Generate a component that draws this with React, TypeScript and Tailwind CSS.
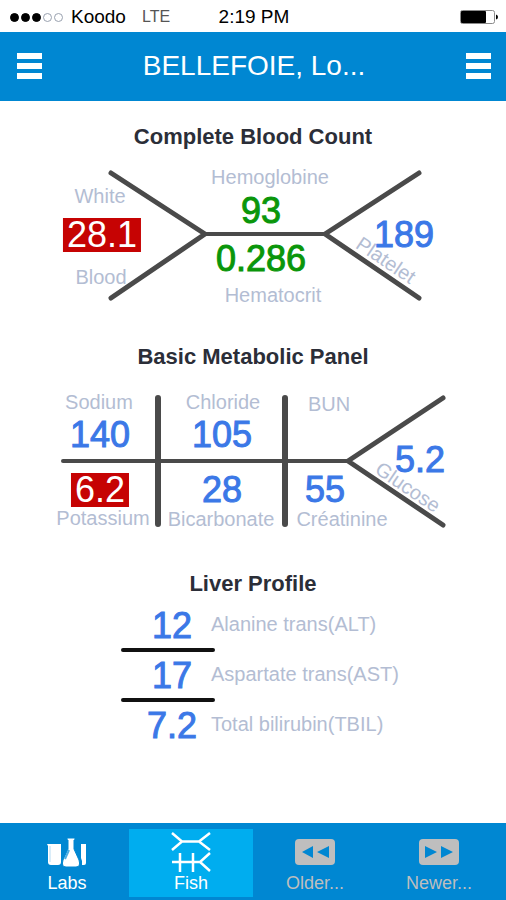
import clsx from "clsx";

type Tone = "high" | "normal" | "stable" | "label";

interface Mark {
  text: string;
  x: number;
  y: number;
  tone: Tone;
  slanted?: boolean;
}

const toneClasses: Record<Tone, string> = {
  high: "bg-[#c60303] px-1 text-4xl leading-[34px] text-white",
  normal: "text-4xl leading-9 text-[#3b78e7] [-webkit-text-stroke:1px_#3b78e7]",
  stable: "text-4xl leading-9 text-[#0a960a] [-webkit-text-stroke:1px_#0a960a]",
  label: "text-xl leading-5 text-[#b3bdd3]",
};

// x / y are the centre of each text on the 400px wide diagram
const bloodCount: Mark[] = [
  { text: "White", x: 47, y: 31, tone: "label" },
  { text: "28.1", x: 49, y: 70, tone: "high" },
  { text: "Blood", x: 48, y: 112, tone: "label" },
  { text: "Hemoglobine", x: 217, y: 12, tone: "label" },
  { text: "93", x: 208, y: 46, tone: "stable" },
  { text: "0.286", x: 208, y: 94, tone: "stable" },
  { text: "Hematocrit", x: 220, y: 130, tone: "label" },
  { text: "Platelet", x: 333, y: 95, tone: "label", slanted: true },
  { text: "189", x: 351, y: 70, tone: "normal" },
];

const metabolicPanel: Mark[] = [
  { text: "Sodium", x: 46, y: 12, tone: "label" },
  { text: "140", x: 47, y: 45, tone: "normal" },
  { text: "6.2", x: 47, y: 100, tone: "high" },
  { text: "Potassium", x: 50, y: 128, tone: "label" },
  { text: "Chloride", x: 170, y: 12, tone: "label" },
  { text: "105", x: 169, y: 45, tone: "normal" },
  { text: "28", x: 169, y: 100, tone: "normal" },
  { text: "Bicarbonate", x: 168, y: 129, tone: "label" },
  { text: "BUN", x: 276, y: 14, tone: "label" },
  { text: "55", x: 272, y: 100, tone: "normal" },
  { text: "Créatinine", x: 289, y: 129, tone: "label" },
  { text: "Glucose", x: 355, y: 97, tone: "label", slanted: true },
  { text: "5.2", x: 367, y: 70, tone: "normal" },
];

const liverProfile = [
  { value: "12", name: "Alanine trans(ALT)" },
  { value: "17", name: "Aspartate trans(AST)" },
  { value: "7.2", name: "Total bilirubin(TBIL)" },
];

function Diagram({ marks, children }: { marks: Mark[]; children: React.ReactNode }) {
  return (
    <div className="relative mx-auto h-[142px] w-[400px]">
      <svg
        viewBox="0 0 400 142"
        className="block h-full w-full"
        fill="none"
        stroke="#4a4a4a"
        strokeWidth="5"
        strokeLinecap="round"
        strokeLinejoin="round"
        aria-hidden="true"
      >
        {children}
      </svg>
      {marks.map((mark) => (
        <span
          key={mark.text}
          className={clsx(
            "absolute -translate-x-1/2 -translate-y-1/2 whitespace-nowrap",
            toneClasses[mark.tone],
            mark.slanted && "rotate-34"
          )}
          style={{ left: mark.x, top: mark.y }}
        >
          {mark.text}
        </span>
      ))}
    </div>
  );
}

function SectionTitle({ children }: { children: React.ReactNode }) {
  return <h2 className="text-center text-[22px] leading-7 font-bold text-[#2b2e38]">{children}</h2>;
}

function MenuButton({ label }: { label: string }) {
  return (
    <button type="button" aria-label={label} className="flex flex-col gap-1">
      <span className="h-[6px] w-[25px] bg-white" />
      <span className="h-[6px] w-[25px] bg-white" />
      <span className="h-[6px] w-[25px] bg-white" />
    </button>
  );
}

function StatusBar() {
  return (
    <div className="grid h-8 grid-cols-[1fr_auto_1fr] items-center pt-[2px] pr-2 pl-[10px] text-[19px] leading-6 text-black">
      <div className="flex items-center">
        <div className="flex gap-[2px]">
          {[true, true, true, false, false].map((filled, i) => (
            <span
              key={i}
              className={clsx(
                "h-[9px] w-[9px] rounded-full border",
                filled ? "border-black bg-black" : "border-gray-400"
              )}
            />
          ))}
        </div>
        <span className="ml-2">Koodo</span>
        <span className="ml-4 text-base text-[#555]">LTE</span>
      </div>
      <span className="font-medium">2:19 PM</span>
      <svg viewBox="0 0 38 16" className="h-4 w-[38px] justify-self-end" aria-label="Battery">
        <rect x="0.5" y="1.5" width="34" height="13" rx="2" fill="white" stroke="#8a8a8a" />
        <rect x="1" y="2" width="25" height="12" rx="1" fill="black" />
        <path d="M36 5.500 Q38 6 38 8 Q38 10 36 10.500 Z" fill="black" />
      </svg>
    </div>
  );
}

function LabsIcon() {
  return (
    <svg viewBox="0 0 40 30" className="h-[30px] w-10" aria-hidden="true">
      <path d="M0 7H14V25Q14 28 11 28H4Q1 28 1 25V9Z" fill="white" />
      <path d="M3 9V25" stroke="#b5dcf3" strokeWidth="1" />
      <path
        d="M20 1H28V3H27V12L32 23Q34 30 29 30H19Q14 30 16 23L21 12V3H20Z"
        fill="white"
        stroke="#0087d2"
        strokeWidth="1"
      />
      <path d="M22 13L18 22" stroke="#4aaee3" strokeWidth="2" />
      <path d="M34 7H39V26Q39 28 37 28H35V24L34 21Z" fill="white" />
    </svg>
  );
}

function FishIcon() {
  return (
    <svg viewBox="0 0 40 42" className="h-[42px] w-10" fill="none" stroke="white" strokeWidth="2.5" aria-hidden="true">
      <path d="M1 2L11 10.500L1 19M11 10.500H28M39 2L28 10.500L39 19" />
      <path d="M1 31H29M9 22V41M22 22V41M39 22L29 31L39 40" />
    </svg>
  );
}

function SkipIcon({ forward = false }: { forward?: boolean }) {
  return (
    <svg viewBox="0 0 40 26" className="h-[26px] w-10" aria-hidden="true">
      <rect width="40" height="26" rx="4" fill="#bebebe" />
      {forward ? (
        <path d="M6 7V19L18 13ZM22 7V19L34 13Z" fill="#0087d2" />
      ) : (
        <path d="M18 7V19L7 13ZM34 7V19L22 13Z" fill="#0087d2" />
      )}
    </svg>
  );
}

const tabs = [
  { name: "Labs", icon: <LabsIcon />, active: false, muted: false },
  { name: "Fish", icon: <FishIcon />, active: true, muted: false },
  { name: "Older...", icon: <SkipIcon />, active: false, muted: true },
  { name: "Newer...", icon: <SkipIcon forward />, active: false, muted: true },
];

export default function App() {
  return (
    <div className="flex min-h-screen flex-col bg-white font-['Liberation_Sans',Arial,sans-serif]">
      <StatusBar />
      <header className="flex h-[69px] items-center justify-between bg-[#0087d2] pr-[15px] pb-[2px] pl-[17px]">
        <MenuButton label="Open menu" />
        <h1 className="text-[28px] leading-8 text-white">BELLEFOIE, Lo...</h1>
        <MenuButton label="Open options" />
      </header>

      <main className="flex-1 pt-[22px]">
        <section>
          <SectionTitle>Complete Blood Count</SectionTitle>
          <div className="pt-[14px]">
            <Diagram marks={bloodCount}>
              <path d="M58 8L152 69L58 133" />
              <path d="M152 69H272" strokeWidth="4" />
              <path d="M366 8L272 69L366 133" />
            </Diagram>
          </div>
        </section>

        <section className="pt-9">
          <SectionTitle>Basic Metabolic Panel</SectionTitle>
          <div className="pt-[19px]">
            <Diagram marks={metabolicPanel}>
              <path d="M10 71H295" strokeWidth="4" />
              <path d="M105 8V134M232 8V134" strokeWidth="6" />
              <path d="M390 8L295 71L390 135" />
            </Diagram>
          </div>
        </section>

        <section className="pt-[38px]">
          <SectionTitle>Liver Profile</SectionTitle>
          <table className="mx-auto mt-1 w-[400px] border-collapse">
            <tbody>
              {liverProfile.map((row, i) => (
                <tr key={row.name} className="h-[50px]">
                  <td className="w-[158px] pl-[68px] align-top">
                    <div className="pt-[6px] pl-3 text-center text-4xl leading-9 text-[#3b78e7] [-webkit-text-stroke:1px_#3b78e7]">
                      {row.value}
                    </div>
                    {i < liverProfile.length - 1 && (
                      <div className="-mr-1 mt-1 h-1 rounded-full bg-[#111]" />
                    )}
                  </td>
                  <th scope="row" className="pt-3 text-left align-top text-xl leading-5 font-normal text-[#b3bdd3]">
                    {row.name}
                  </th>
                </tr>
              ))}
            </tbody>
          </table>
        </section>
      </main>

      <nav className="grid h-[77px] grid-cols-4 bg-[#0087d2] px-[5px] pt-[6px] pb-[3px]">
        {tabs.map((tab) => (
          <button
            key={tab.name}
            type="button"
            aria-current={tab.active ? "page" : undefined}
            className={clsx(
              "flex flex-col items-center text-lg leading-4",
              tab.active && "bg-[#00adef]",
              tab.muted ? "text-[#bebebe]" : "text-white"
            )}
          >
            <span className="flex h-[46px] items-center">{tab.icon}</span>
            <span>{tab.name}</span>
          </button>
        ))}
      </nav>
    </div>
  );
}
